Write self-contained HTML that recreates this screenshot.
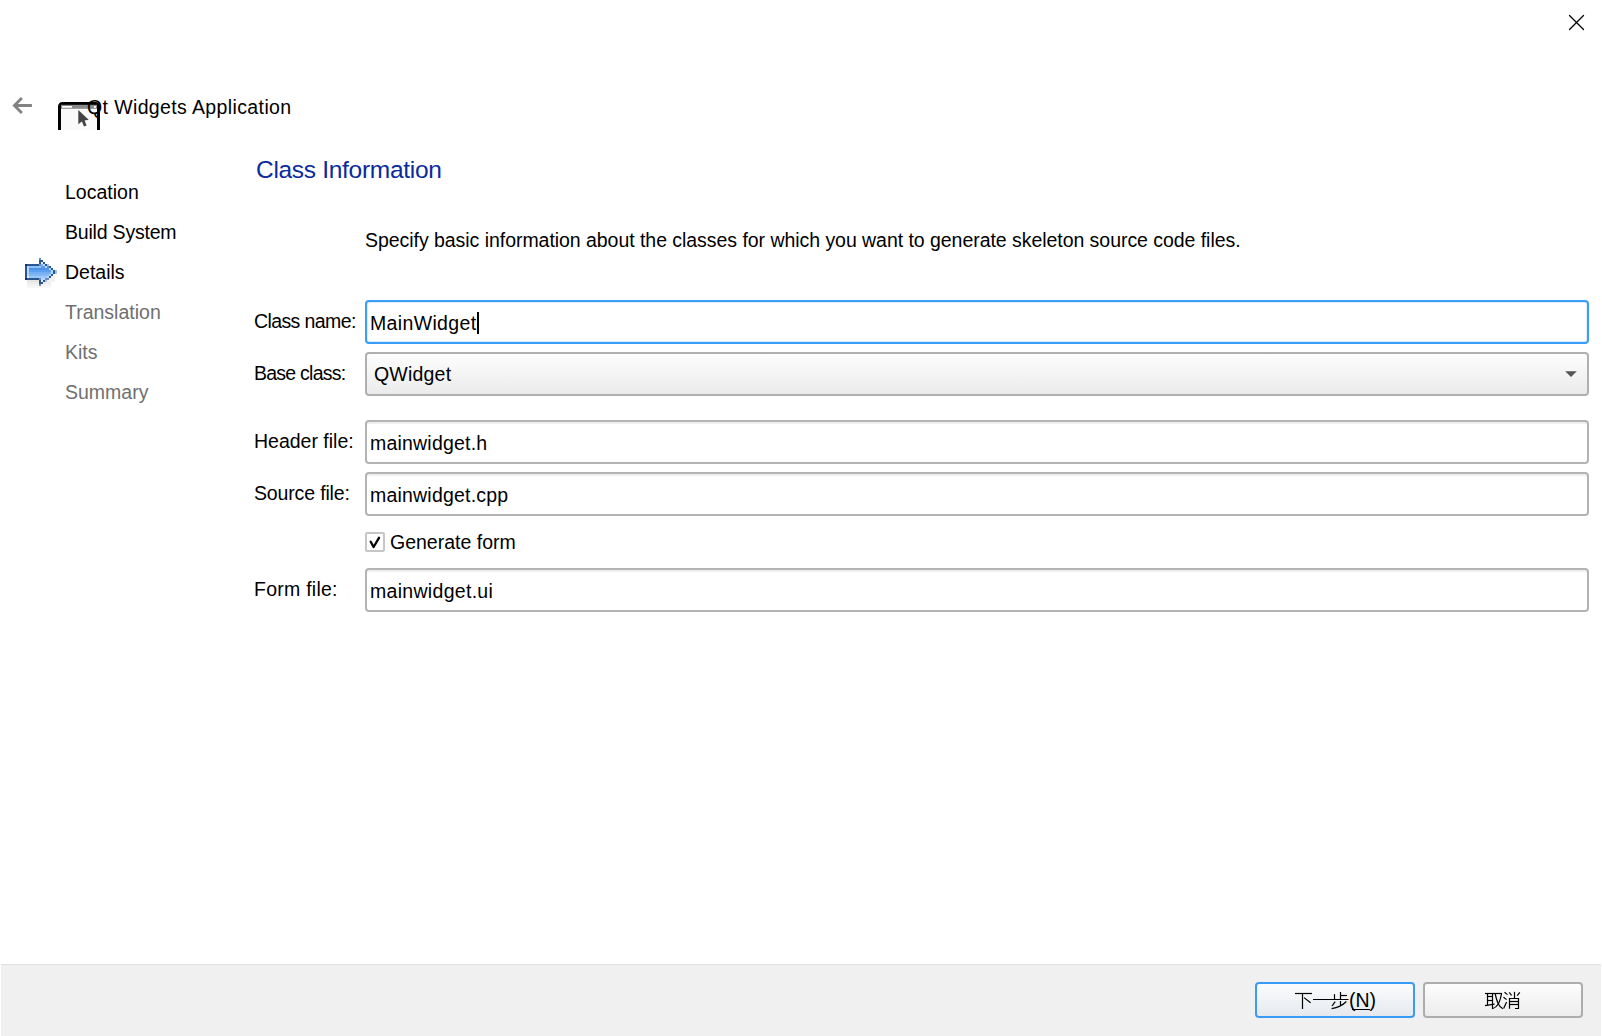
<!DOCTYPE html>
<html>
<head>
<meta charset="utf-8">
<style>
html,body{margin:0;padding:0;}
body{width:1602px;height:1036px;position:relative;overflow:hidden;background:#fff;font-family:"Liberation Sans",sans-serif;color:#000;}
.t{position:absolute;white-space:pre;font-size:19.5px;line-height:19.5px;}
.g{color:#6f6f6f;}
.inp{position:absolute;left:365px;width:1224px;height:44px;box-sizing:border-box;border:2px solid #b3b3b3;border-radius:4px;background:#fff;box-shadow:inset 0 2px 0 #efefef;}
.btn{position:absolute;top:982px;height:36px;width:160px;box-sizing:border-box;border-radius:4px;}
</style>
</head>
<body>
<!-- close -->
<svg style="position:absolute;left:1560px;top:8px" width="32" height="30" viewBox="0 0 32 30">
<path d="M9.5 7.5 L23.5 21.5 M23.5 7.5 L9.5 21.5" stroke="#000" stroke-width="1.25" stroke-linecap="round" fill="none"/>
</svg>
<!-- back arrow -->
<svg style="position:absolute;left:8px;top:92px" width="30" height="26" viewBox="0 0 30 26">
<path d="M4.4 13.5 L12.9 5 L14.9 7 L9.9 12 H23.9 V15 H9.9 L14.9 20 L12.9 22 Z" fill="#838383"/>
</svg>
<!-- app icon (clipped) -->
<div style="position:absolute;left:58px;top:102px;width:42px;height:28px;overflow:hidden;">
<svg width="42" height="40" viewBox="0 0 42 40" style="position:absolute;left:0;top:0">
<rect x="1.5" y="1.5" width="39" height="38" rx="3" fill="#fafafa" stroke="#000" stroke-width="3"/>
<rect x="3" y="2.8" width="36" height="4" fill="#898989"/>
<rect x="4" y="4" width="10" height="1.8" rx="0.6" fill="#fff"/>
<rect x="35.9" y="4" width="2.1" height="1.8" fill="#fff"/>
<path d="M20.3 8.1 L20.3 22.2 L23.9 19.6 L26 24.6 L28.6 23.5 L26.6 18.6 L30.7 17.7 Z" fill="#444"/>
</svg>
</div>
<div class="t" style="left:87px;top:98px;letter-spacing:0.38px">Qt Widgets Application</div>

<!-- nav -->
<div class="t" style="left:65px;top:183px">Location</div>
<div class="t" style="left:65px;top:223px;letter-spacing:-0.2px">Build System</div>
<svg style="position:absolute;left:25.15px;top:258px" width="31.5" height="31.5" viewBox="0 0 16 16" shape-rendering="crispEdges"><rect x="1" y="11" width="6" height="1" fill="#000" opacity="0.10"/><rect x="1" y="12" width="12" height="1" fill="#000" opacity="0.07"/><rect x="1" y="13" width="12" height="1" fill="#000" opacity="0.05"/><rect x="1" y="14" width="12" height="1" fill="#000" opacity="0.03"/><rect x="10" y="9" width="5" height="3" fill="#000" opacity="0.05"/><rect x="7" y="0" width="1" height="1" fill="#6b8cbf"/><rect x="7" y="1" width="2" height="1" fill="#2a5590"/><rect x="7" y="2" width="1" height="1" fill="#2a5590"/><rect x="8" y="2" width="1" height="1" fill="#e2f0ff"/><rect x="9" y="2" width="1" height="1" fill="#2a5590"/><rect x="0" y="3" width="1" height="1" fill="#0d3573"/><rect x="1" y="3" width="6" height="1" fill="#2a5590"/><rect x="7" y="3" width="1" height="1" fill="#6b8cbf"/><rect x="8" y="3" width="1" height="1" fill="#7db6f6"/><rect x="9" y="3" width="1" height="1" fill="#b5d8ff"/><rect x="10" y="3" width="1" height="1" fill="#2a5590"/><rect x="11" y="3" width="1" height="1" fill="#a9bcd9"/><rect x="0" y="4" width="1" height="1" fill="#2a5590"/><rect x="1" y="4" width="1" height="1" fill="#b5d8ff"/><rect x="2" y="4" width="6" height="1" fill="#8cc0f8"/><rect x="8" y="4" width="2" height="1" fill="#5a9cf0"/><rect x="10" y="4" width="1" height="1" fill="#b5d8ff"/><rect x="11" y="4" width="1" height="1" fill="#6b8cbf"/><rect x="12" y="4" width="1" height="1" fill="#2a5590"/><rect x="0" y="5" width="1" height="1" fill="#2a5590"/><rect x="1" y="5" width="1" height="1" fill="#b5d8ff"/><rect x="2" y="5" width="10" height="1" fill="#4f92ea"/><rect x="12" y="5" width="1" height="1" fill="#b5d8ff"/><rect x="13" y="5" width="1" height="1" fill="#2a5590"/><rect x="0" y="6" width="1" height="1" fill="#2a5590"/><rect x="1" y="6" width="1" height="1" fill="#b5d8ff"/><rect x="2" y="6" width="11" height="1" fill="#5c9eef"/><rect x="13" y="6" width="1" height="1" fill="#b5d8ff"/><rect x="14" y="6" width="1" height="1" fill="#2a5590"/><rect x="15" y="6" width="1" height="1" fill="#a9bcd9"/><rect x="0" y="7" width="1" height="1" fill="#2a5590"/><rect x="1" y="7" width="1" height="1" fill="#b5d8ff"/><rect x="2" y="7" width="11" height="1" fill="#74aef3"/><rect x="13" y="7" width="1" height="1" fill="#b5d8ff"/><rect x="14" y="7" width="1" height="1" fill="#2a5590"/><rect x="15" y="7" width="1" height="1" fill="#a9bcd9"/><rect x="0" y="8" width="1" height="1" fill="#2a5590"/><rect x="1" y="8" width="1" height="1" fill="#b5d8ff"/><rect x="2" y="8" width="10" height="1" fill="#82b8f5"/><rect x="12" y="8" width="1" height="1" fill="#b5d8ff"/><rect x="13" y="8" width="1" height="1" fill="#2a5590"/><rect x="0" y="9" width="1" height="1" fill="#2a5590"/><rect x="1" y="9" width="1" height="1" fill="#e2f0ff"/><rect x="2" y="9" width="9" height="1" fill="#9cc8f8"/><rect x="11" y="9" width="1" height="1" fill="#b5d8ff"/><rect x="12" y="9" width="1" height="1" fill="#2a5590"/><rect x="0" y="10" width="1" height="1" fill="#0d3573"/><rect x="1" y="10" width="6" height="1" fill="#2a5590"/><rect x="7" y="10" width="1" height="1" fill="#6b8cbf"/><rect x="8" y="10" width="2" height="1" fill="#b5d8ff"/><rect x="10" y="10" width="2" height="1" fill="#6b8cbf"/><rect x="7" y="11" width="1" height="1" fill="#2a5590"/><rect x="8" y="11" width="1" height="1" fill="#e2f0ff"/><rect x="9" y="11" width="1" height="1" fill="#2a5590"/><rect x="10" y="11" width="1" height="1" fill="#a9bcd9"/><rect x="7" y="12" width="2" height="1" fill="#2a5590"/><rect x="7" y="13" width="1" height="1" fill="#6b8cbf"/></svg>
<div class="t" style="left:65px;top:263px">Details</div>
<div class="t g" style="left:65px;top:303px">Translation</div>
<div class="t g" style="left:65px;top:343px">Kits</div>
<div class="t g" style="left:65px;top:383px">Summary</div>

<!-- heading -->
<div class="t" style="left:256px;top:158px;font-size:24.5px;line-height:24.5px;color:#0a2a9e;letter-spacing:-0.3px">Class Information</div>
<div class="t" style="left:365px;top:231px;letter-spacing:-0.045px">Specify basic information about the classes for which you want to generate skeleton source code files.</div>

<!-- form -->
<div class="t" style="left:254px;top:312px;letter-spacing:-0.6px">Class name:</div>
<div class="inp" style="top:300px;border-color:#3a9ef8;box-shadow:inset 0 0 0 1px #dcecfb;"></div>
<div class="t" style="left:370px;top:314px;letter-spacing:0.35px">MainWidget</div>
<div style="position:absolute;left:477px;top:312px;width:2px;height:22px;background:#000"></div>

<div class="t" style="left:254px;top:364px;letter-spacing:-0.75px">Base class:</div>
<div class="inp" style="top:352px;background:linear-gradient(#fdfdfd,#ebebeb);box-shadow:none;border-color:#b0b0b0;"></div>
<div class="t" style="left:374px;top:365px;letter-spacing:0.2px">QWidget</div>
<svg style="position:absolute;left:1563px;top:369px" width="16" height="10" viewBox="0 0 16 10"><path d="M2.2 2.3 H13.8 L8 8 Z" fill="#555"/></svg>

<div class="t" style="left:254px;top:432px">Header file:</div>
<div class="inp" style="top:420px"></div>
<div class="t" style="left:370px;top:434px;letter-spacing:0.2px">mainwidget.h</div>

<div class="t" style="left:254px;top:484px;letter-spacing:-0.15px">Source file:</div>
<div class="inp" style="top:472px"></div>
<div class="t" style="left:370px;top:486px;letter-spacing:0.2px">mainwidget.cpp</div>

<div style="position:absolute;left:365px;top:532px;width:20px;height:20px;box-sizing:border-box;border:2px solid #c6c6c6;border-radius:2px;background:#fff"></div>
<svg style="position:absolute;left:365px;top:532px" width="20" height="20" viewBox="0 0 20 20"><path d="M5.7 9.7 L8.6 15.0 L14.0 5.8" stroke="#000" stroke-width="2.3" stroke-linecap="round" stroke-linejoin="round" fill="none"/></svg>
<div class="t" style="left:390px;top:533px">Generate form</div>

<div class="t" style="left:254px;top:580px;letter-spacing:0.25px">Form file:</div>
<div class="inp" style="top:568px"></div>
<div class="t" style="left:370px;top:582px;letter-spacing:0.3px">mainwidget.ui</div>

<!-- bottom bar -->
<div style="position:absolute;left:1px;top:964px;width:1600px;height:72px;background:#f0f0f0;border-top:1px solid #dfdfdf;box-sizing:border-box"></div>
<div class="btn" style="left:1255px;border:2px solid #3a9bf6;background:linear-gradient(#fbfcfd,#e5e9ee)"></div>
<div class="btn" style="left:1423px;border:2px solid #adadad;background:linear-gradient(#fdfdfd,#ededed)"></div>
<!-- button labels -->
<svg style="position:absolute;left:1290px;top:988px" width="60" height="26" viewBox="0 0 60 26">
<g stroke="#000" stroke-width="1.2" fill="none" stroke-linecap="butt">
<path d="M5 5.5 H22"/><path d="M12.5 5.5 V21"/><path d="M14 9.6 L20.6 14.8"/>
<path d="M23 11.5 H58.5"/>
<path d="M50.5 4 V11.5"/><path d="M44.5 6.2 V11.5"/><path d="M50.5 7.5 H57"/>
<path d="M50.5 13 V17.5"/><path d="M45.2 13.6 L42 18"/><path d="M56.4 13.5 Q51 19 41.6 20.6"/>
</g>
</svg>
<div class="t" style="left:1349px;top:991px">(N)</div>
<div style="position:absolute;left:1352px;top:1009px;width:18px;height:1px;background:#000"></div>
<svg style="position:absolute;left:1480px;top:988px" width="45" height="26" viewBox="0 0 45 26">
<g stroke="#000" stroke-width="1.2" fill="none">
<path d="M5 5.5 H22"/><path d="M7.5 5.5 V17.3"/><path d="M12.5 5.5 V21"/>
<path d="M7.5 8.5 H12.5"/><path d="M7.5 12.5 H12.5"/><path d="M5 17.6 L14.5 16.2"/>
<path d="M21.6 5.5 Q20.2 12.5 18.3 16 Q16 19.6 12.4 20.8"/><path d="M15.2 6 Q16.6 12.5 18.3 16 Q20 19.2 22.8 20.8"/>
<path d="M24.5 4.2 L27.5 6.6"/><path d="M23.5 9.2 L26.6 11.6"/><path d="M23.6 20.6 L26.6 14"/>
<path d="M29.2 4.4 L31.6 7.3"/><path d="M34.5 3.8 V10.5"/><path d="M39.8 4.4 L37.2 7.6"/>
<path d="M29.5 20.8 V10.5 H38.5 V20.5 H35"/><path d="M29.5 13.5 H38.5"/><path d="M29.5 16.5 H38.5"/>
</g>
</svg>
</body>
</html>
